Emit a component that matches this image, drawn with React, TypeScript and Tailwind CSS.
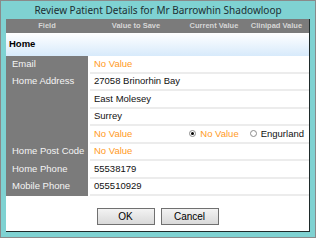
import React from "react";

type Row = {
  label?: string;
  value?: string;
  empty?: boolean;
  radios?: boolean;
};

const rows: Row[] = [
  { label: "Email", empty: true },
  { label: "Home Address", value: "27058 Brinorhin Bay" },
  { value: "East Molesey" },
  { value: "Surrey" },
  { empty: true, radios: true },
  { label: "Home Post Code", empty: true },
  { label: "Home Phone", value: "55538179" },
  { label: "Mobile Phone", value: "055510929" },
];

function Radio({ checked }: { checked?: boolean }) {
  return (
    <span className="w-[7px] h-[7px] rounded-full border border-[#8c8c8c] bg-white flex items-center justify-center">
      {checked && <span className="w-[3px] h-[3px] rounded-full bg-black" />}
    </span>
  );
}

export default function App() {
  return (
    <div className="w-[318px] h-[240px] bg-white" style={{ fontFamily: '"Liberation Sans", Arial, sans-serif' }}>
      <div className="w-[316px] h-[238px] border border-[#8a8a8a] bg-[#7fd2d2] flex flex-col px-[5px] pb-[5px]">
        {/* title bar */}
        <div
          className="h-[18px] flex items-center justify-center text-[10px] text-[#1c2f33]"
          style={{ fontFamily: '"Noto Sans", "Open Sans", sans-serif' }}
        >
          Review Patient Details for Mr Barrowhin Shadowloop
        </div>

        <div className="flex-1 bg-white border-r border-b border-[#1e2a2a] flex flex-col">
          {/* column header */}
          <div className="h-[14px] bg-[#7b7b7b] flex items-center text-[7.5px] font-semibold text-[#d6d6d6]">
            <div className="w-[82px] text-center">Field</div>
            <div className="w-[96px] text-center">Value to Save</div>
            <div className="w-[60px] text-center">Current Value</div>
            <div className="flex-1 text-center">Clinipad Value</div>
          </div>

          {/* section */}
          <div className="h-[23px] flex items-center pl-[3px] bg-gradient-to-b from-white to-[#d7eafb] text-[9.5px] font-bold text-black">
            Home
          </div>

          {/* rows */}
          <div className="flex flex-col">
            {rows.map((r, i) => (
              <div key={i} className="flex h-[17.5px]">
                <div className="w-[82px] bg-[#7b7b7b] text-[#f4f4f4] text-[9.5px] pl-[6px] flex items-center pb-[2px]">
                  {r.label}
                </div>
                <div className="flex-1 ml-[2px] border-b-2 border-[#ececec] flex items-center pl-[4px] pr-[5px] text-[9.5px]">
                  {r.empty ? (
                    <span className="text-[#ff9a1e]">No Value</span>
                  ) : (
                    <span className="text-[#111]">{r.value}</span>
                  )}
                  {r.radios && (
                    <div className="ml-auto flex items-center">
                      <Radio checked />
                      <span className="ml-[4px] text-[#ff9a1e]">No Value</span>
                      <span className="ml-[11px]"><Radio /></span>
                      <span className="ml-[4px] text-[#111]">Engurland</span>
                    </div>
                  )}
                </div>
              </div>
            ))}
          </div>

          {/* buttons */}
          <div className="flex justify-center gap-[6px] mt-[12px]">
            <button className="w-[58px] h-[17px] border border-[#707070] bg-gradient-to-b from-[#f3f3f3] to-[#d9d9d9] text-[10px] text-black leading-none">
              OK
            </button>
            <button className="w-[58px] h-[17px] border border-[#707070] bg-gradient-to-b from-[#f3f3f3] to-[#d9d9d9] text-[10px] text-black leading-none">
              Cancel
            </button>
          </div>
        </div>
      </div>
    </div>
  );
}
